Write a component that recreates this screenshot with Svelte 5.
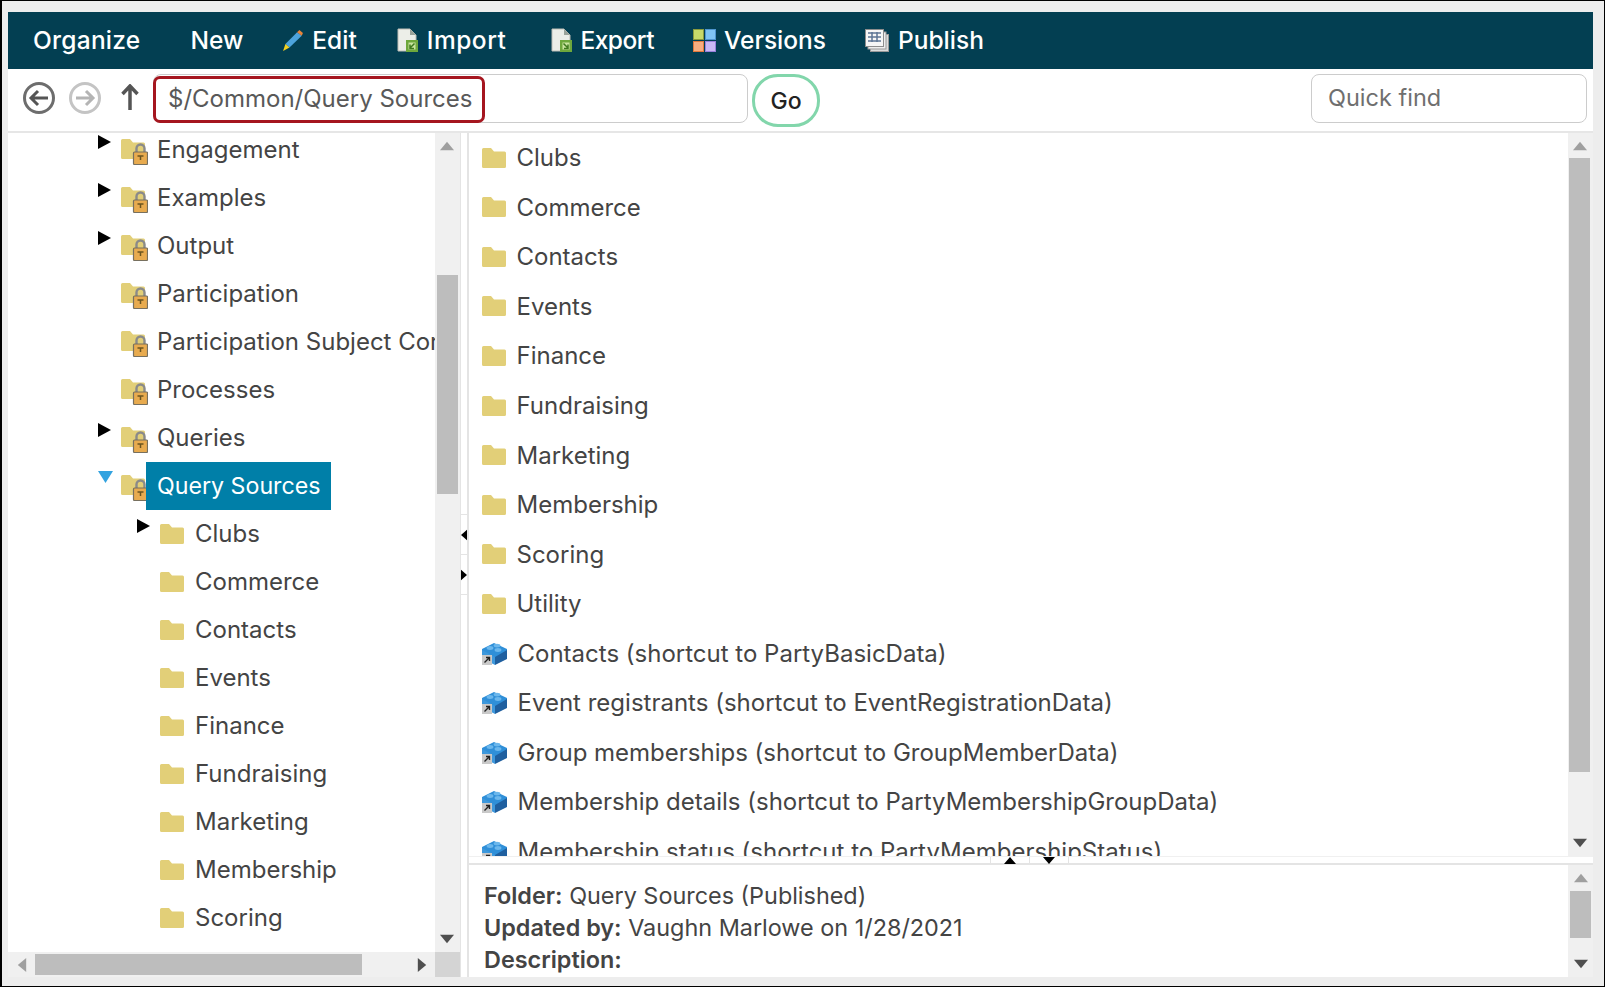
<script>
  const tree = [
    { name: 'Engagement', arrow: true, lock: true, d: 0 },
    { name: 'Examples', arrow: true, lock: true, d: 0 },
    { name: 'Output', arrow: true, lock: true, d: 0 },
    { name: 'Participation', lock: true, d: 0 },
    { name: 'Participation Subject Correlation', lock: true, d: 0 },
    { name: 'Processes', lock: true, d: 0 },
    { name: 'Queries', arrow: true, lock: true, d: 0 },
    { name: 'Query Sources', open: true, lock: true, sel: true, d: 0 },
    { name: 'Clubs', arrow: true, d: 1 },
    { name: 'Commerce', d: 1 },
    { name: 'Contacts', d: 1 },
    { name: 'Events', d: 1 },
    { name: 'Finance', d: 1 },
    { name: 'Fundraising', d: 1 },
    { name: 'Marketing', d: 1 },
    { name: 'Membership', d: 1 },
    { name: 'Scoring', d: 1 }
  ];
  const folders = ['Clubs','Commerce','Contacts','Events','Finance','Fundraising','Marketing','Membership','Scoring','Utility'];
  const links = [
    'Contacts (shortcut to PartyBasicData)',
    'Event registrants (shortcut to EventRegistrationData)',
    'Group memberships (shortcut to GroupMemberData)',
    'Membership details (shortcut to PartyMembershipGroupData)',
    'Membership status (shortcut to PartyMembershipStatus)'
  ];
</script>

{#snippet folder()}
  <svg class="folder" viewBox="0 0 24 20" width="24" height="20"><path d="M0 1.500Q0 0 1.500 0H9l3 3.500h10.500Q24 3.500 24 5v13.500Q24 20 22.500 20h-21Q0 20 0 18.500z" fill="#e2cf78"/></svg>
{/snippet}

{#snippet lockFolder()}
  <svg class="lockfolder" viewBox="0 0 27 26" width="27" height="26">
    <path d="M0 1.500Q0 0 1.500 0H9l3 3.500h10.500Q24 3.500 24 5v13.500Q24 20 22.500 20h-21Q0 20 0 18.500z" fill="#e2cf78"/>
    <path d="M15.500 14v-4.500a4 4 0 0 1 8 0V14" fill="none" stroke="#8a8a8a" stroke-width="2.400"/>
    <rect x="12.500" y="13" width="14" height="12.500" rx="1" fill="#e8ab4f" stroke="#77705f" stroke-width="1.200"/>
    <path d="M16.500 17h6M19.500 17v4" stroke="#6b5520" stroke-width="1.500" fill="none"/>
  </svg>
{/snippet}

{#snippet brick()}
  <svg class="brick" viewBox="0 0 25 23" width="25" height="23">
    <path d="M0 7 12 1l13 6v2L13 16 0 9z" fill="#2f8fd8"/>
    <path d="M0 8l13 7v8L0 16z" fill="#3d98dc"/>
    <path d="M13 15l12-7v9l-12 6z" fill="#1f5f9f"/>
    <ellipse cx="8" cy="6" rx="3.400" ry="1.900" fill="#6bb7ec"/>
    <ellipse cx="15" cy="3.600" rx="3.400" ry="1.900" fill="#6bb7ec"/>
    <ellipse cx="16" cy="8" rx="3.400" ry="1.900" fill="#6bb7ec"/>
    <rect x="0" y="13" width="10" height="10" fill="#c9c9c9"/>
    <path d="M2.500 20.500 7.500 15.500M4 15.500h3.500V19" stroke="#222" stroke-width="1.400" fill="none"/>
  </svg>
{/snippet}

{#snippet doc(kind)}
  <svg class="navicon" viewBox="0 0 21 25" width="21" height="25">
    <path d="M1 1h12l6 6v16H1z" fill="#eceee8" stroke="#bdbdb5"/>
    <path d="M13 1v6h6z" fill="#9aa39a"/>
    <rect x="9" y="12" width="12" height="12" fill="#6ea83c"/>
    <rect x="11.500" y="14.500" width="7" height="7" fill="#c9e49f"/>
    {#if kind === 'in'}
      <path d="M17.500 15.500l-4.500 4.500M13 16.500V20.500h4" stroke="#3f7a1e" stroke-width="1.500" fill="none"/>
    {:else}
      <path d="M12.500 15.500l4.500 4.500M17 16.500V20.500h-4" stroke="#3f7a1e" stroke-width="1.500" fill="none"/>
    {/if}
  </svg>
{/snippet}

{#snippet tri(dir, color, size)}
  <svg class="tri" viewBox="0 0 10 10" width={size} height={size} style:transform={`rotate(${dir}deg)`}><path d="M0 8 5 2l5 6z" fill={color}/></svg>
{/snippet}

<div class="frame">
  <header class="nav">
    <span class="item first">Organize</span>
    <span class="item second">New</span>
    <span class="item">
      <svg class="navicon" viewBox="2 1 17 18" width="20" height="21">
        <path d="M4 13 14 3l4 3L7.500 16z" fill="#4da3dc"/>
        <path d="M14 3l2-2 3 2.500-1 2.500z" fill="#e8843a"/>
        <path d="M4 13l3.500 3L2 19z" fill="#f4d21f"/>
      </svg>Edit</span>
    <span class="item imp">{@render doc('in')}Import</span>
    <span class="item exp">{@render doc('out')}Export</span>
    <span class="item ver">
      <svg class="navicon" viewBox="0 0 23 23" width="23" height="23">
        <rect x="0.500" y="0.500" width="10" height="10" fill="#c6d96a" stroke="#8a9a3e"/>
        <rect x="12.500" y="0.500" width="10" height="10" fill="#7fc4f4" stroke="#4f95cf"/>
        <rect x="0.500" y="12.500" width="10" height="10" fill="#f8ae80" stroke="#e2793c"/>
        <rect x="12.500" y="12.500" width="10" height="10" fill="#c9b8f4" stroke="#9880dc"/>
      </svg>Versions</span>
    <span class="item pub">
      <svg class="navicon" viewBox="0 0 24 23" width="24" height="23">
        <rect x="5.500" y="5.500" width="18" height="17" fill="#dcdcdc" stroke="#999"/>
        <rect x="3" y="3" width="18" height="17" fill="#eee" stroke="#999"/>
        <rect x="0.500" y="0.500" width="18" height="17" fill="#f6f6f6" stroke="#8d8d8d"/>
        <path d="M3 4h13M3 8h13M3 12h13M7 3v10M12 3v10" stroke="#5d7595" stroke-width="1.500" fill="none"/>
      </svg>Publish</span>
  </header>

  <div class="toolbar">
    <svg class="tool" viewBox="0 0 32 32" width="32" height="32">
      <circle cx="16" cy="16" r="14.500" fill="none" stroke="#6d6d6d" stroke-width="3"/>
      <path d="M25 16H9M15 9l-7 7 7 7" fill="none" stroke="#555" stroke-width="3"/>
    </svg>
    <svg class="tool fwd" viewBox="0 0 32 32" width="32" height="32">
      <circle cx="16" cy="16" r="14.500" fill="none" stroke="#c4c4c4" stroke-width="3"/>
      <path d="M7 16h16M17 9l7 7-7 7" fill="none" stroke="#b4b4b4" stroke-width="3"/>
    </svg>
    <svg class="tool up" viewBox="0 0 18 26" width="18" height="26">
      <path d="M9 26V3M1.500 10 9 2l7.500 8" fill="none" stroke="#555" stroke-width="3.500"/>
    </svg>
    <div class="pathbox">
      <span class="path">$/Common/Query Sources</span>
    </div>
    <button class="go">Go</button>
    <div class="spacer"></div>
    <div class="quick">Quick find</div>
  </div>

  <div class="main">
    <section class="left">
      <div class="left-top">
        <div class="tree">
          {#each tree as row}
            <div class="row" class:deep={row.d === 1}>
              <span class="twist">
                {#if row.arrow}<svg viewBox="0 0 13 14" width="13" height="14"><path d="M0 0l13 7L0 14z" fill="#000"/></svg>{/if}
                {#if row.open}<svg viewBox="0 0 15 12" width="15" height="12"><path d="M0 0h15L7.500 12z" fill="#33a3e0"/></svg>{/if}
              </span>
              {#if row.lock}{@render lockFolder()}{:else}{@render folder()}{/if}
              <span class="label" class:sel={row.sel}>{row.name}</span>
            </div>
          {/each}
        </div>
        <div class="vbar lbar">
          <div class="arrow">{@render tri(0, '#9f9f9f', 14)}</div>
          <div class="thumb lt"></div>
          <div class="grow"></div>
          <div class="arrow">{@render tri(180, '#4f4f4f', 14)}</div>
        </div>
      </div>
      <div class="hbar">
        <div class="harrow">{@render tri(270, '#9f9f9f', 14)}</div>
        <div class="hthumb"></div>
        <div class="grow"></div>
        <div class="harrow r">{@render tri(90, '#4f4f4f', 14)}</div>
        <div class="corner"></div>
      </div>
    </section>

    <div class="vsplit">
      <div class="vs-cell"></div>
      <div class="vs-btn">
        <svg viewBox="0 0 7 12" width="7" height="12"><path d="M7 0v12L0 6z" fill="#000"/></svg>
      </div>
      <div class="vs-btn">
        <svg viewBox="0 0 7 12" width="7" height="12"><path d="M0 0v12l7-6z" fill="#000"/></svg>
      </div>
    </div>

    <section class="right">
      <div class="list-wrap">
        <div class="list">
          {#each folders as f}
            <div class="lrow">{@render folder()}<span class="ltext">{f}</span></div>
          {/each}
          {#each links as l}
            <div class="lrow">{@render brick()}<span class="ltext">{l}</span></div>
          {/each}
        </div>
        <div class="vbar rbar">
          <div class="arrow r-up">{@render tri(0, '#9f9f9f', 14)}</div>
          <div class="thumb rt"></div>
          <div class="grow"></div>
          <div class="arrow">{@render tri(180, '#4f4f4f', 14)}</div>
        </div>
      </div>
      <div class="hsplit">
        <div class="hs-btn">
          <svg viewBox="0 0 12 7" width="12" height="7"><path d="M0 7h12L6 0z" fill="#000"/></svg>
        </div>
        <div class="hs-btn">
          <svg viewBox="0 0 12 7" width="12" height="7"><path d="M0 0h12L6 7z" fill="#000"/></svg>
        </div>
      </div>
      <div class="details">
        <div class="info">
          <div><b>Folder:</b> Query Sources (Published)</div>
          <div><b>Updated by:</b> Vaughn Marlowe on 1/28/2021</div>
          <div><b>Description:</b></div>
        </div>
        <div class="vbar">
          <div class="arrow">{@render tri(0, '#9f9f9f', 14)}</div>
          <div class="thumb dt"></div>
          <div class="grow"></div>
          <div class="arrow">{@render tri(180, '#4f4f4f', 14)}</div>
        </div>
      </div>
    </section>
  </div>
</div>

<style>
  :global(body) { margin: 0; background: #ededed; }
  .frame {
    width: 1605px; height: 987px; box-sizing: border-box;
    border: 1px solid #000; border-left-width: 2px;
    padding: 11px 11px 9px 6px;
    background: #ededed;
    display: flex; flex-direction: column;
    font-family: Inter, "Open Sans", sans-serif;
    color: #444;
    overflow: hidden;
  }
  .nav {
    height: 57px; flex: none; background: #033f52; color: #fff; box-sizing: border-box;
    display: flex; align-items: center; padding: 0 0 1px 25px;
    font-size: 24.500px; font-weight: 500; gap: 40px;
  }
  .item { display: flex; align-items: center; gap: 9px; white-space: nowrap; }
  .first { letter-spacing: 0.250px; }
  .second { margin-left: 10px; }
  .imp { letter-spacing: 0.500px; }
  .exp { margin-left: 5px; gap: 8px; letter-spacing: -0.500px; }
  .ver { margin-left: -1px; gap: 8px; }
  .pub { margin-left: -1px; }
  .navicon { flex: none; }

  .toolbar {
    height: 64px; flex: none; background: #fff; box-sizing: border-box;
    border-bottom: 2px solid #e6e6e6;
    display: flex; align-items: flex-start; padding: 5px 6px 0 15px;
  }
  .tool { flex: none; margin-top: 8px; }
  .fwd { margin-left: 14px; }
  .up { margin: 10px 0 0 20px; }
  .pathbox {
    width: 595px; height: 49px; margin-left: 14px; box-sizing: border-box;
    border: 1px solid #ccc; border-radius: 8px; position: relative;
    display: flex; align-items: flex-start;
  }
  .path {
    width: 332px; height: 47px; box-sizing: border-box; margin: 1px 0 0 -1px;
    border: 3px solid #a5161f; border-radius: 7px;
    padding-left: 12px; font-size: 24px; line-height: 40px; color: #595959; white-space: nowrap;
  }
  .go {
    width: 68px; height: 53px; margin-left: 4px; box-sizing: border-box;
    border: 3px solid #82d6ab; border-radius: 26px; background: #fff;
    font: 500 23px Inter, sans-serif; color: #222; padding: 0;
  }
  .spacer { flex: 1; }
  .quick {
    width: 276px; height: 49px; box-sizing: border-box;
    border: 1px solid #ccc; border-radius: 8px;
    padding-left: 16px; font-size: 23.500px; line-height: 46px; color: #6f6f6f;
  }

  .main { flex: 1; min-height: 0; display: flex; background: #fff; }
  .left { width: 452px; flex: none; display: flex; flex-direction: column; }
  .left-top { flex: 1; min-height: 0; display: flex; }
  .tree { flex: 1; min-width: 0; overflow: hidden; }
  .tree > :first-child { margin-top: -7px; }
  .row {
    height: 48px; display: flex; align-items: center; white-space: nowrap;
    padding-left: 90px; font-size: 24px;
  }
  .row.deep { padding-left: 129px; }
  .twist { width: 23px; height: 14px; flex: none; margin-top: -16px; display: flex; }
  .lockfolder { flex: none; margin-top: 4px; margin-right: -2px; }
  .folder { flex: none; }
  .label { margin-left: 11px; padding: 0 11px 0 0; line-height: 48px; }
  .label.sel {
    background: #007fa8; color: #fff; font-size: 23.200px;
    margin-left: 0; padding: 0 11px;
  }

  .vbar {
    width: 25px; flex: none; background: #f0f0f0;
    display: flex; flex-direction: column; align-items: center;
    box-sizing: border-box;
  }
  .vbar.lbar { padding-right: 1px; }
  .vbar.rbar { padding-right: 2px; }
  .arrow { height: 26px; display: flex; align-items: center; justify-content: center; flex: none; }
  .thumb { width: 21px; background: #bdbdbd; flex: none; }
  .lt { height: 219px; margin-top: 116px; }
  .r-up { height: 25px; }
  .rt { height: 614px; }
  .dt { height: 47px; }
  .grow { flex: 1; }
  .tri { display: block; }

  .hbar { height: 25px; flex: none; background: #f0f0f0; display: flex; align-items: center; }
  .harrow { width: 27px; display: flex; justify-content: center; flex: none; }
  .harrow.r { width: 26px; }
  .hthumb { width: 327px; height: 21px; background: #bdbdbd; flex: none; }
  .corner { width: 25px; height: 25px; background: #d4d4d4; flex: none; }

  .vsplit {
    width: 9px; flex: none; box-sizing: border-box;
    border-left: 1px solid #e4e4e4; border-right: 2px solid #e4e4e4;
    display: flex; flex-direction: column;
  }
  .vs-cell { height: 381px; border-bottom: 1px solid #e4e4e4; }
  .vs-btn {
    height: 39px; border-bottom: 1px solid #e4e4e4;
    display: flex; align-items: center;
  }

  .right { flex: 1; min-width: 0; display: flex; flex-direction: column; }
  .list-wrap { height: 723px; flex: none; display: flex; }
  .list { flex: 1; min-width: 0; overflow: hidden; }
  .lrow {
    height: 49.550px; display: flex; align-items: center; white-space: nowrap;
    padding-left: 13px; font-size: 24px;
  }
  .ltext { margin-left: 10.500px; }
  .brick { flex: none; }

  .hsplit {
    height: 9px; flex: none; box-sizing: border-box;
    border-bottom: 2px solid #e4e4e4; border-top: 1px solid #f0f0f0;
    display: flex; padding-left: 521px;
  }
  .hs-btn {
    width: 39px; border-left: 1px solid #e4e4e4; box-sizing: border-box;
    display: flex; justify-content: center; align-items: flex-start;
  }
  .hs-btn:last-child { border-right: 1px solid #e4e4e4; width: 40px; }

  .details { flex: 1; min-height: 0; display: flex; }
  .info { flex: 1; padding: 15px 0 0 15px; font-size: 23.400px; line-height: 32px; overflow: hidden; }
  .info b { font-weight: 600; }
</style>
